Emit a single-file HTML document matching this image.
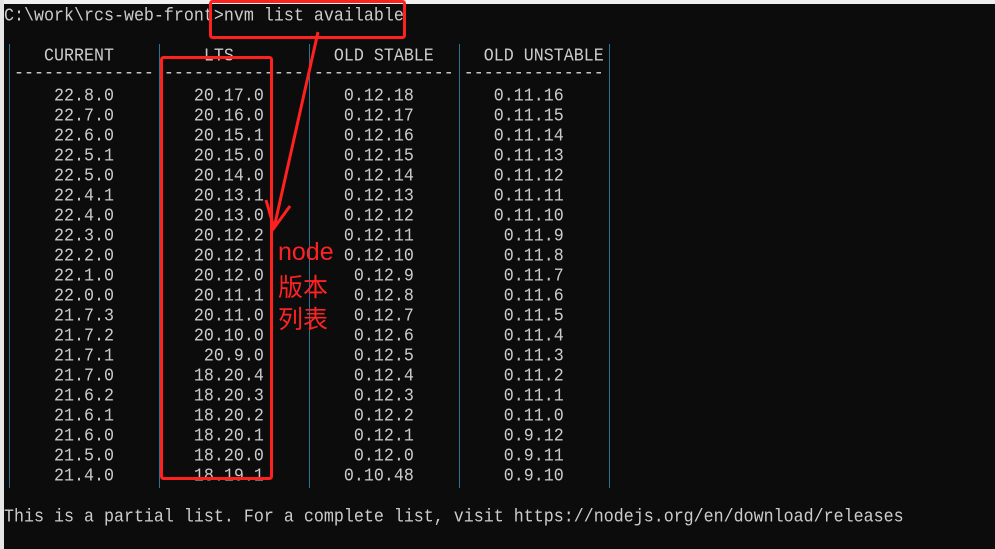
<!DOCTYPE html>
<html><head><meta charset="utf-8"><style>
html,body{margin:0;padding:0;}
body{width:995px;height:549px;background:#0c0c0c;position:relative;overflow:hidden;font-family:"Liberation Mono","Noto Sans CJK SC",monospace;color:#cccccc;}
.l{position:absolute;left:4px;white-space:pre;font-size:16.667px;line-height:20px;height:20px;transform:scaleY(1.12);transform-origin:0 50%;}
.bar{position:absolute;width:1px;background:#2b7393;top:44px;height:444px;}
.lbl{position:absolute;left:278px;color:#ff2222;font-family:"Liberation Sans","Noto Sans CJK SC",sans-serif;font-size:25px;line-height:32px;}
</style></head><body>
<div style="position:absolute;left:0;top:0;width:995px;height:4px;background:#f0f0f0"></div>
<div style="position:absolute;left:0;top:0;width:4px;height:549px;background:#e6e6e6"></div>
<div class="l" style="top:7px">C:\work\rcs-web-front&gt;nvm list available</div>
<div class="bar" style="left:9px"></div><div class="bar" style="left:159px"></div><div class="bar" style="left:309px"></div><div class="bar" style="left:459px"></div><div class="bar" style="left:609px"></div>
<div class="l" style="top:47px">    CURRENT         LTS          OLD STABLE     OLD UNSTABLE</div>
<div class="l" style="top:64px"> -------------- -------------- -------------- --------------</div>
<div class="l" style="top:87px">     22.8.0        20.17.0        0.12.18        0.11.16</div>
<div class="l" style="top:107px">     22.7.0        20.16.0        0.12.17        0.11.15</div>
<div class="l" style="top:127px">     22.6.0        20.15.1        0.12.16        0.11.14</div>
<div class="l" style="top:147px">     22.5.1        20.15.0        0.12.15        0.11.13</div>
<div class="l" style="top:167px">     22.5.0        20.14.0        0.12.14        0.11.12</div>
<div class="l" style="top:187px">     22.4.1        20.13.1        0.12.13        0.11.11</div>
<div class="l" style="top:207px">     22.4.0        20.13.0        0.12.12        0.11.10</div>
<div class="l" style="top:227px">     22.3.0        20.12.2        0.12.11         0.11.9</div>
<div class="l" style="top:247px">     22.2.0        20.12.1        0.12.10         0.11.8</div>
<div class="l" style="top:267px">     22.1.0        20.12.0         0.12.9         0.11.7</div>
<div class="l" style="top:287px">     22.0.0        20.11.1         0.12.8         0.11.6</div>
<div class="l" style="top:307px">     21.7.3        20.11.0         0.12.7         0.11.5</div>
<div class="l" style="top:327px">     21.7.2        20.10.0         0.12.6         0.11.4</div>
<div class="l" style="top:347px">     21.7.1         20.9.0         0.12.5         0.11.3</div>
<div class="l" style="top:367px">     21.7.0        18.20.4         0.12.4         0.11.2</div>
<div class="l" style="top:387px">     21.6.2        18.20.3         0.12.3         0.11.1</div>
<div class="l" style="top:407px">     21.6.1        18.20.2         0.12.2         0.11.0</div>
<div class="l" style="top:427px">     21.6.0        18.20.1         0.12.1         0.9.12</div>
<div class="l" style="top:447px">     21.5.0        18.20.0         0.12.0         0.9.11</div>
<div class="l" style="top:467px">     21.4.0        18.19.1        0.10.48         0.9.10</div>
<div class="l" style="top:508px">This is a partial list. For a complete list, visit https://nodejs.org/en/download/releases</div>
<svg style="position:absolute;left:0;top:0" width="995" height="549">
<g fill="none" stroke="#ff2020" stroke-width="3">
<rect x="210.5" y="1.5" width="194" height="36" rx="2"/>
<rect x="161.5" y="57.5" width="110" height="421" rx="2"/>
<line x1="318" y1="32" x2="274" y2="228"/>
<polyline points="266,200 274,228 290,206"/>
</g></svg>
<div class="lbl" style="top:236px">node</div>
<div class="lbl" style="top:272px">版本</div>
<div class="lbl" style="top:304px">列表</div>
</body></html>
